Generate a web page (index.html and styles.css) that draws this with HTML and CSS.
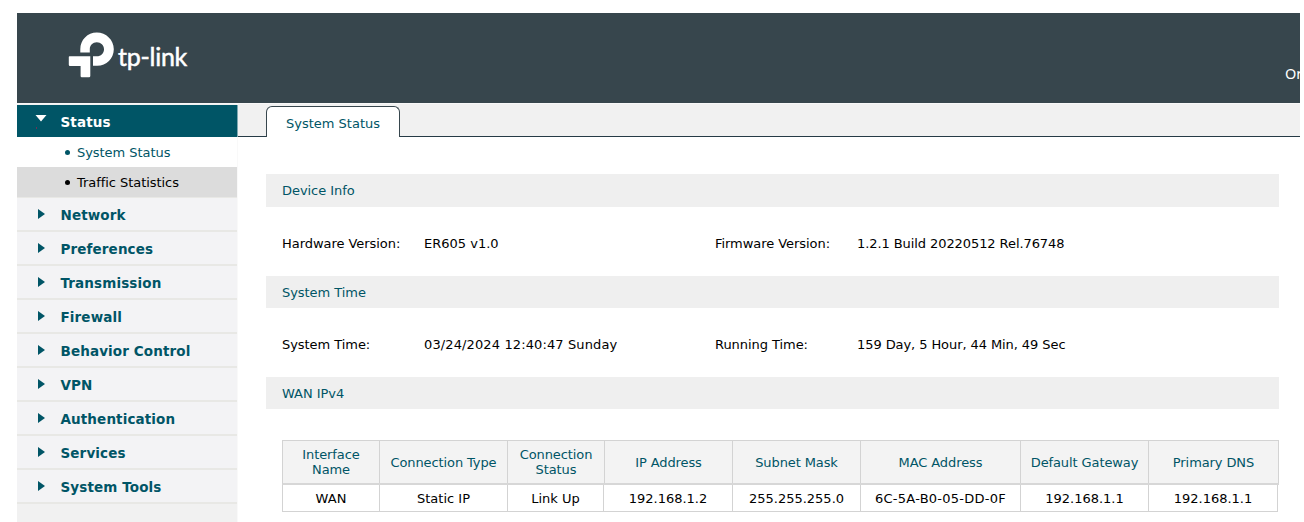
FILE: index.html
```html
<!DOCTYPE html>
<html lang="en">
<head>
<meta charset="utf-8">
<title>System Status</title>
<link rel="stylesheet" href="styles.css">
</head>
<body>
<div class="page">
  <header class="header">
    <div class="brand">
      <svg class="mark" width="46" height="46" viewBox="0 0 46 46" fill="#fff">
        <path d="M12.3 20.6V17C12.3 8 19.5 .5 28.8 .5S45.8 8 45.8 17.2 38.5 33.8 29.2 33.8H25V24.3H28.8C33 24.3 36 21.2 36 17.2S32.8 10.2 28.8 10.2 21.8 13.2 21.8 17.2V20.6Z"/>
        <path d="M1.5 24.2H22.3V44Q22.3 45.2 21.1 45.2H13.8Q12.6 45.2 12.6 44V34H2Q.8 34 .8 32.8V25Q.8 24.2 1.5 24.2Z"/>
      </svg>
      <span class="wordmark">tp-link</span>
    </div>
    <span class="org">Or</span>
  </header>
  <div class="body">
    <nav class="sidebar">
      <div class="menu open"><svg class="arrow" width="14" height="14" viewBox="0 0 14 14"><path d="M1.5 0H12.5L7 6.5Z" fill="#fff"/><path d="M2 12h1v2h-1z" fill="#6b3456"/></svg>Status</div>
      <div class="sub"><i></i><span>System Status</span></div>
      <div class="sub hover"><i></i><span>Traffic Statistics</span></div>
      <div class="menu"><svg class="arrow" width="14" height="12" viewBox="0 0 14 12"><path d="M4 1L11 6L4 11Z"/></svg>Network</div>
      <div class="menu"><svg class="arrow" width="14" height="12" viewBox="0 0 14 12"><path d="M4 1L11 6L4 11Z"/></svg>Preferences</div>
      <div class="menu"><svg class="arrow" width="14" height="12" viewBox="0 0 14 12"><path d="M4 1L11 6L4 11Z"/></svg>Transmission</div>
      <div class="menu"><svg class="arrow" width="14" height="12" viewBox="0 0 14 12"><path d="M4 1L11 6L4 11Z"/></svg>Firewall</div>
      <div class="menu"><svg class="arrow" width="14" height="12" viewBox="0 0 14 12"><path d="M4 1L11 6L4 11Z"/></svg>Behavior Control</div>
      <div class="menu"><svg class="arrow" width="14" height="12" viewBox="0 0 14 12"><path d="M4 1L11 6L4 11Z"/></svg>VPN</div>
      <div class="menu"><svg class="arrow" width="14" height="12" viewBox="0 0 14 12"><path d="M4 1L11 6L4 11Z"/></svg>Authentication</div>
      <div class="menu"><svg class="arrow" width="14" height="12" viewBox="0 0 14 12"><path d="M4 1L11 6L4 11Z"/></svg>Services</div>
      <div class="menu"><svg class="arrow" width="14" height="12" viewBox="0 0 14 12"><path d="M4 1L11 6L4 11Z"/></svg>System Tools</div>
    </nav>
    <main class="main">
      <div class="tabs"><div class="tab">System Status</div></div>
      <div class="content">
        <h2 class="bar first">Device Info</h2>
        <div class="info"><span class="label">Hardware Version:</span><span>ER605 v1.0</span><span class="label">Firmware Version:</span><span class="tight">1.2.1 Build 20220512 Rel.76748</span></div>
        <h2 class="bar">System Time</h2>
        <div class="info"><span class="label">System Time:</span><span class="date">03/24/2024 12:40:47 Sunday</span><span class="label">Running Time:</span><span class="tight">159 Day, 5 Hour, 44 Min, 49 Sec</span></div>
        <h2 class="bar">WAN IPv4</h2>
        <div class="grid head">
          <div>Interface<br>Name</div><div>Connection Type</div><div>Connection<br>Status</div><div>IP Address</div><div>Subnet Mask</div><div>MAC Address</div><div>Default Gateway</div><div>Primary DNS</div>
        </div>
        <div class="grid row">
          <div>WAN</div><div>Static IP</div><div>Link Up</div><div>192.168.1.2</div><div>255.255.255.0</div><div class="mac">6C-5A-B0-05-DD-0F</div><div>192.168.1.1</div><div>192.168.1.1</div>
        </div>
      </div>
    </main>
  </div>
</div>
</body>
</html>
```

FILE: styles.css
```css
* { box-sizing: border-box; }
html, body { margin: 0; height: 100%; overflow: hidden; background: #fff; }
body { padding: 13px 4px 0 17px; font: 13px/15px Verdana, "DejaVu Sans", sans-serif; color: #000; }
.page { height: 509px; width: 1283px; overflow: hidden; display: flex; flex-direction: column; }
.header { flex: none; height: 90px; background: #37464d; display: flex; justify-content: space-between; color: #fff; }
.brand { display: flex; padding: 19px 0 0 51px; }
.mark { flex: none; }
.wordmark { font: 25px/30px Lato, sans-serif; letter-spacing: -.25px; margin: 9px 0 0 4px; -webkit-text-stroke: .5px #fff; }
.org { flex: none; width: 15px; white-space: nowrap; font: 14.5px/18px "Noto Sans", sans-serif; padding-top: 51px; }
.body { flex: 1; display: flex; min-height: 0; border-top: 1px solid #f8f8f8; }
.sidebar { flex: none; width: 221px; background: #f1f1f1; padding-top: 1px; border-right: 1px solid #f9f9f9; }
.menu { height: 34px; display: flex; align-items: center; padding: 3px 0 0 17px; background: #f3f3f5; border-bottom: 2px solid #e8e8e5; color: #005566; font-weight: bold; font-size: 13.5px; letter-spacing: .12px; }
.arrow { margin-right: 12.5px; fill: #005566; flex: none; position: relative; top: -2px; }
.menu.open { height: 32px; background: #005566; color: #fff; border: 0; margin-right: -1px; border-right: 1px solid #7fa9b2; }
.menu.open .arrow { top: -1px; }
.sub { height: 30px; background: #fff; color: #005566; display: flex; align-items: center; padding: 1px 0 0 47.5px; letter-spacing: -.05px; }
.sub i { width: 5px; height: 5px; border-radius: 50%; background: currentColor; margin-right: 7.5px; }
.sub.hover { height: 31px; background: #dcdcdc; color: #000; border-bottom: 1px solid #e8e8e5; }
.main { flex: 1; min-width: 0; }
.tabs { height: 33px; background: #f1f1f1; border-bottom: 1px solid #263b46; padding: 2px 0 0 28px; }
.tab { width: 134px; height: 31px; border: 1px solid #37464d; border-bottom: 0; border-radius: 6px 6px 0 0; background: #fff; color: #005566; text-align: center; line-height: 33px; }
.content { padding: 37px 21px 0 28px; }
.bar { height: 32px; margin: 0; background: #efefef; color: #005566; font-size: 13px; font-weight: normal; line-height: 34px; padding-left: 16px; letter-spacing: -.05px; }
.bar.first { height: 33px; line-height: 33px; }
.info { height: 69px; display: grid; grid-template-columns: 142px 291px 142px 1fr; align-items: center; padding: 4px 0 0 16px; white-space: nowrap; }
.label { letter-spacing: -.05px; }
.tight { letter-spacing: -.08px; }
.date { letter-spacing: .12px; }
.grid { display: grid; text-align: center; margin-left: 16px; border-left: 1px solid #d3d3d3; }
.grid div { display: flex; align-items: center; justify-content: center; border-right: 1px solid #d3d3d3; white-space: nowrap; }
.head { margin-top: 31px; height: 45px; background: #f3f3f3; border-top: 1px solid #d3d3d3; border-bottom: 2px solid #d7d7d7; color: #005566; letter-spacing: -.1px; grid-template-columns: 97px 128px 97px 128px 128px 160px 128px 130px; }
.row { height: 27px; width: 996px; border-bottom: 1px solid #d3d3d3; grid-template-columns: 97px 128px 96px 129px 128px 160px 128px 129px; }
.grid .mac { letter-spacing: .25px; }
```
